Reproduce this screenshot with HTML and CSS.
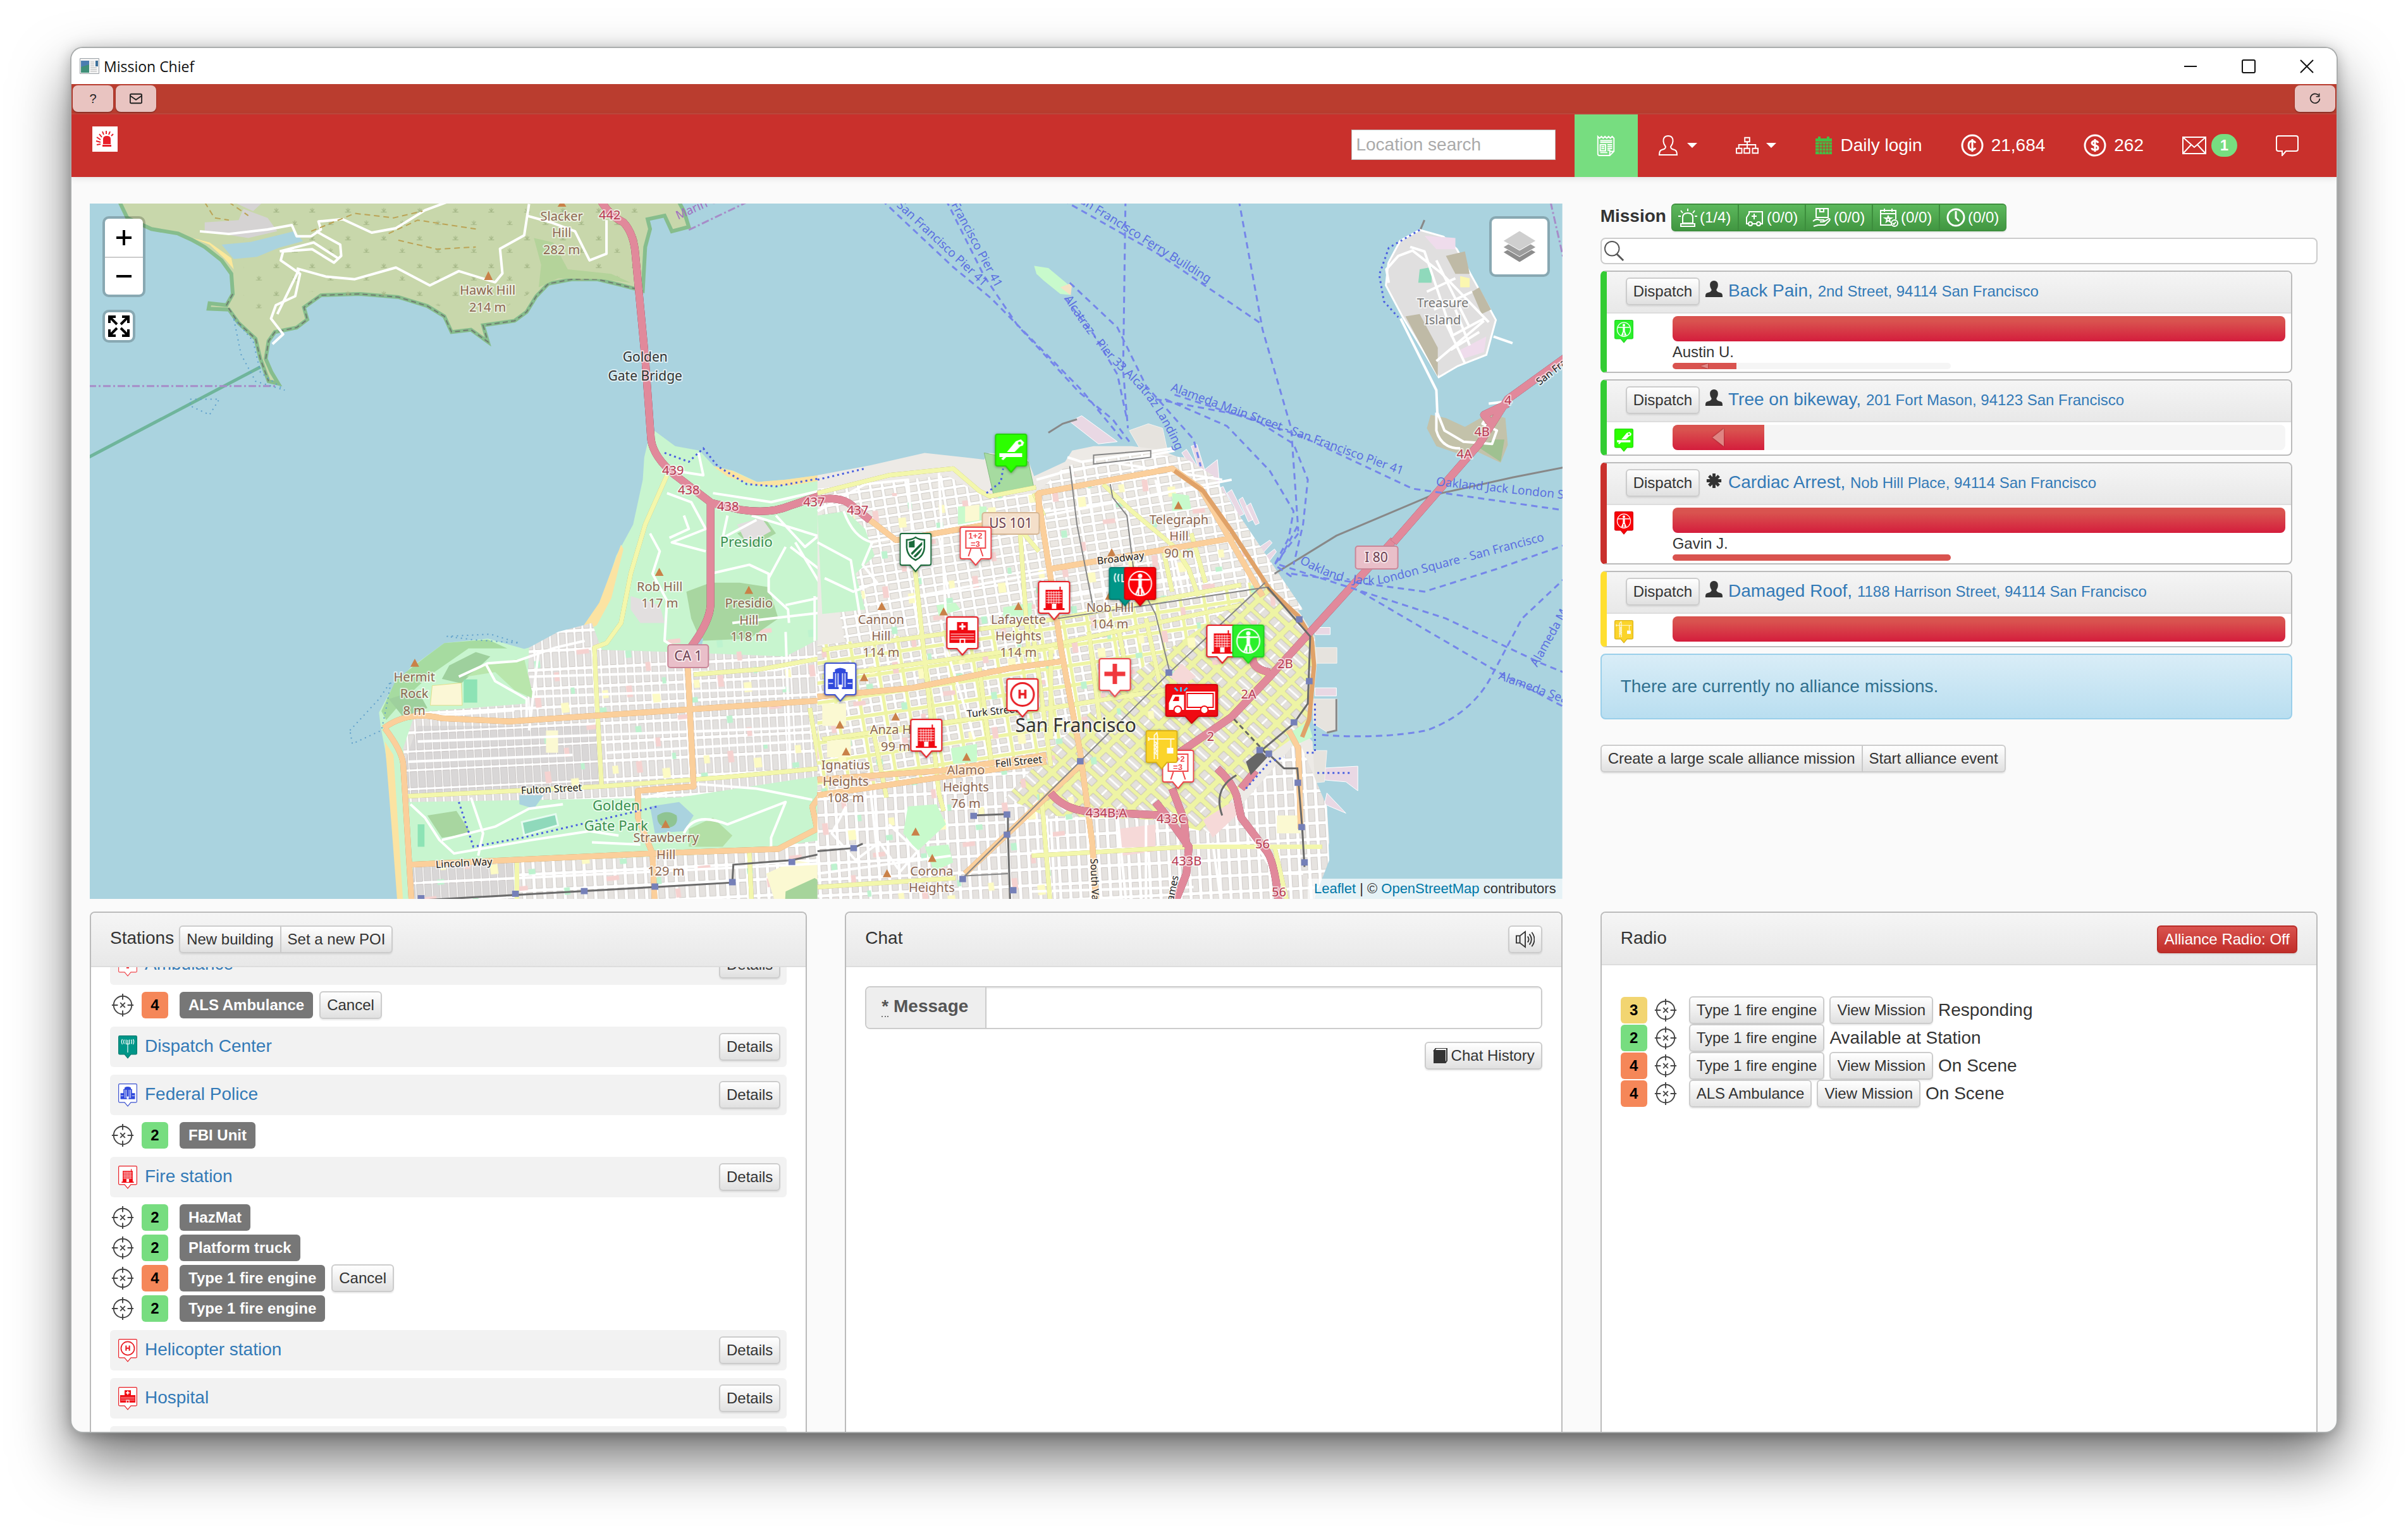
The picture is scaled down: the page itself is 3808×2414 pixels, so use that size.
FILE: index.html
```html
<!DOCTYPE html>
<html lang="en">
<head>
<meta charset="utf-8">
<meta name="viewport" content="width=device-width, initial-scale=1">
<title>Mission Chief</title>
<link rel="stylesheet" href="styles.css">
</head>
<body>
<svg class="defs" aria-hidden="true">
  <defs>
    <path id="pin" d="M4 1h43a3 3 0 0 1 3 3v44a3 3 0 0 1-3 3H34l-8.500 10L17 51H4a3 3 0 0 1-3-3V4a3 3 0 0 1 3-3z"/>
    <g id="man" fill="none" stroke="#fff" stroke-width="2">
      <ellipse cx="25.500" cy="26" rx="18" ry="19"/>
      <circle cx="25.500" cy="14" r="2.500" fill="#fff"/>
      <path d="M9 20l16 0 16 0M25.500 18v16M24 18v13l-5 12M27 18v13l5 12M23 32v12M28 32v12" stroke-width="2.500"/>
    </g>
    <symbol id="i-fire" viewBox="0 0 51 63"><use href="#pin" fill="#fff" stroke="#e81c23" stroke-width="2"/><path fill="#f00a12" d="M12 14h22v-5h2v5h3v29h3v3H9v-3h3z"/><path stroke="#fff" stroke-width="1" d="M13 18h25M13 22h25M13 26h25M13 30h25M13 34h25M17 16v20M21 16v20M25 16v20M29 16v20M33 16v20"/><path fill="#fff" d="M22 36h7v8h-7z"/></symbol>
    <symbol id="i-hospital" viewBox="0 0 51 63"><use href="#pin" fill="#fff" stroke="#e81c23" stroke-width="2"/><path fill="#f00a12" d="M17 9h17v13h12v20H5V22h12z"/><path fill="none" stroke="#fff" stroke-width="3" d="M25.500 11v10M20.500 16h10"/><path stroke="#fff" d="M7 28h37M7 32h37M7 36h37" /><path fill="#fff" d="M21 35h9v8h-9z"/><path fill="#f00a12" d="M23 37h5v5h-5z"/></symbol>
    <symbol id="i-heli" viewBox="0 0 51 63"><use href="#pin" fill="#fff" stroke="#e81c23" stroke-width="2"/><ellipse cx="25.500" cy="25.500" rx="18" ry="18" fill="none" stroke="#e81c23" stroke-width="3"/><path fill="none" stroke="#e81c23" stroke-width="3.500" d="M21 18v14M30 18v14M21 25h9"/></symbol>
    <symbol id="i-med" viewBox="0 0 51 63"><use href="#pin" fill="#fff" stroke="#f0474c" stroke-width="2"/><path stroke="#f0383d" stroke-width="7" d="M25.500 9v32M9 25h33"/></symbol>
    <symbol id="i-fed" viewBox="0 0 51 63"><use href="#pin" fill="#fff" stroke="#3a50d0" stroke-width="2"/><path fill="#2f49dc" d="M17 11q8-5 17 0v4h3v11h8v16H6V26h8V15h3z"/><path stroke="#fff" stroke-width="1.500" d="M18 17v22M22 17v22M29 17v22M33 17v22M7 33h7M37 33h7"/><path fill="#fff" d="M23 35h5v7h-5z"/></symbol>
    <symbol id="i-shield" viewBox="0 0 51 63"><use href="#pin" fill="#fff" stroke="#1c6b3c" stroke-width="2"/><path fill="#fff" stroke="#1c6b3c" stroke-width="2.500" d="M25.500 7q6 4 14 4v12q-1 14-14 20-13-6-14-20V11q8 0 14-4z"/><path fill="#1c6b3c" d="M24 11v12H15V14q5 0 9-3zM18 32l18-18v5L20 35zM22 37l14-14q-1 8-11 16z"/></symbol>
    <symbol id="i-school" viewBox="0 0 51 63"><use href="#pin" fill="#fff" stroke="#f0474c" stroke-width="2"/><path fill="none" stroke="#f0474c" stroke-width="2" d="M10 7h31v27H10zM18 35l-4 12M33 35l4 12"/><text x="25" y="19" class="pin-digits" text-anchor="middle">1+2</text><text x="25" y="32" class="pin-digits" text-anchor="middle">=3</text></symbol>
    <symbol id="i-dispatch" viewBox="0 0 51 63"><use href="#pin" fill="#009688" stroke="#067c70" stroke-width="2"/><path fill="none" stroke="#fff" stroke-width="2" d="M25.500 12v34M21 11v12h9V11M16 11q-3 6 0 12M11 10q-4 7 0 14M35 11q3 6 0 12M40 10q4 7 0 14"/></symbol>
    <symbol id="i-man-red" viewBox="0 0 51 63"><use href="#pin" fill="#fa0008" stroke="#d30008" stroke-width="2"/><use href="#man"/></symbol>
    <symbol id="i-man-green" viewBox="0 0 51 63"><use href="#pin" fill="#2bf02b" stroke="#1fd41f" stroke-width="2"/><use href="#man"/></symbol>
    <symbol id="i-saw" viewBox="0 0 51 63"><use href="#pin" fill="#2cff00" stroke="#22d800" stroke-width="2"/><path fill="#fff" d="M7 31h36v6H7zM13 42l-3-2 6-6h5zM19 29l14-17 8-3 5 5-2 5-4 1-9 9z"/><circle cx="39" cy="15" r="2.500" fill="#2cff00"/></symbol>
    <symbol id="i-crane" viewBox="0 0 51 63"><use href="#pin" fill="#fbd42a" stroke="#d9b21b" stroke-width="2"/><path fill="none" stroke="#fff" stroke-width="2" d="M14 46V8l4-4 1 6M19 46V10M5 14h41M5 11v6M40 14v14M14 18l5 3-5 3 5 3-5 3 5 3-5 3 5 3" opacity=".85"/><path fill="#fff" d="M34 28h10v9H34z"/></symbol>
    <symbol id="i-truck" viewBox="0 0 84 63"><path fill="#f00a12" stroke="#d30008" stroke-width="2" d="M4 1h76a3 3 0 0 1 3 3v44a3 3 0 0 1-3 3H53L42 62 32 51H4a3 3 0 0 1-3-3V4a3 3 0 0 1 3-3z"/><path fill="#fff" d="M33 12h46v29H33zM6 41V30l6-13h18v24z"/><path fill="#f00a12" d="M12 27l4-7h6v7z"/><path stroke="#f00a12" stroke-width="2" fill="none" d="M35 15h41v22H35z"/><g fill="#fff" stroke="#f00a12" stroke-width="2"><circle cx="20" cy="41" r="6"/><circle cx="62" cy="41" r="6"/></g><path stroke="#4cb7e8" stroke-width="3" d="M25 12V5M20 11l-5-5M30 11l5-5"/></symbol>
    <symbol id="i-target" viewBox="0 0 38 42"><g fill="none" stroke="#444" stroke-width="2"><circle cx="19" cy="21" r="15"/><path d="M19 2v10M19 30v10M1 21h10M27 21h10M15 17l8 8M23 17l-8 8"/></g></symbol>
    <symbol id="i-user" viewBox="0 0 30 30"><path d="M15 1c5 0 7 4 6.500 8-.3 4-2 5-2.500 7 0 3 4 4 7 5 3 1 3 4 3 7H1c0-3 0-6 3-7 3-1 7-2 7-5-.5-2-2.200-3-2.500-7C8 5 10 1 15 1z"/></symbol>
    <symbol id="i-star" viewBox="0 0 30 30"><path fill="none" stroke="#333" stroke-width="5" d="M15 3v24M3 15h24M7 7l16 16M23 7L7 23"/></symbol>

    <pattern id="p-rich" width="17" height="42" patternUnits="userSpaceOnUse" patternTransform="rotate(-3)"><path fill="#fff" d="M0 0h17v42H0z"/><path fill="#e3e1df" stroke="#c4bfba" d="M2.500 4.500h12v34h-12z"/></pattern>
    <pattern id="p-sun" width="17" height="42" patternUnits="userSpaceOnUse" patternTransform="rotate(-3)"><path fill="#fff" d="M0 0h17v42H0z"/><path fill="#d9d7d7" stroke="#bdb9b7" d="M1.500 3.500h14v36h-14z"/></pattern>
    <pattern id="p-north" width="25" height="21" patternUnits="userSpaceOnUse" patternTransform="rotate(-9)"><path fill="#fff" d="M0 0h25v21H0z"/><path fill="#ebe8e3" stroke="#c2bdb8" d="M3.500 3.500h18v14h-18z"/></pattern>
    <pattern id="p-down" width="50" height="44" patternUnits="userSpaceOnUse" patternTransform="rotate(-9)"><path fill="#fff" d="M0 0h50v44H0z"/><path fill="#eef4a4" d="M0 0h50v8H0zM0 0h7v44H0z"/><path fill="#e7e4df" stroke="#bfbab4" d="M9.500 10.500h13v11h-13zM29.500 10.500h15v11h-15zM9.500 28.500h13v12h-13zM29.500 28.500h15v12h-15z"/></pattern>
    <pattern id="p-soma" width="44" height="58" patternUnits="userSpaceOnUse" patternTransform="rotate(44)"><path fill="#eef4a4" d="M0 0h44v58H0z"/><path fill="#e4e1dc" stroke="#bab5af" d="M6.500 6.500h31v17h-31zM6.500 32.500h31v20h-31z"/><path fill="#fff" d="M20 7h4v16h-4zM7 41h30v4H7z"/></pattern>
    <pattern id="p-miss" width="21" height="36" patternUnits="userSpaceOnUse" patternTransform="rotate(-3)"><path fill="#fff" d="M0 0h21v36H0z"/><path fill="#e6e3e0" stroke="#c2bdb8" d="M3.500 3.500h13v28h-13z"/></pattern>
    <pattern id="p-speck" width="190" height="170" patternUnits="userSpaceOnUse" patternTransform="rotate(-7)"><path fill="#f6d2d0" d="M20 18h12v26H20zM118 96h26v10h-26zM66 140h10v20H66z"/><path fill="#fdfbc4" d="M72 40h16v22H72zM160 22h12v18h-12z"/><path fill="#bdf3cf" d="M150 60h14v12h-14zM28 110h12v16H28zM96 8h8v14h-8z"/></pattern>
    <pattern id="p-scrub" width="74" height="62" patternUnits="userSpaceOnUse"><path fill="none" stroke="#a3b585" stroke-width="1.500" d="M12 22h12M18 22v-9M18 21l-4-6M18 21l4-6M50 50h12M56 50v-9M56 49l-4-6M56 49l4-6"/></pattern>
  </defs>
</svg>

<div class="window">
  <header class="titlebar">
    <svg class="app-icon" viewBox="0 0 31 25"><path fill="#f4f4f4" stroke="#9aa0a6" d="M.5.5h30v24H.5z"/><path fill="#3f8f78" d="M2 4h13v19H2z"/><path fill="#4a7db0" d="M2 4h13v6L2 14z"/><path fill="#3a6f9a" d="M25 4h4v9h-4z"/><path stroke="#b8b8b8" d="M17 6h6M17 9h6M17 12h6M17 15h10M17 18h10M17 21h10"/></svg>
    <h1>Mission Chief</h1>
    <div class="caption">
      <button type="button" aria-label="Minimize"><svg viewBox="0 0 22 22"><path d="M1 11h20"/></svg></button>
      <button type="button" aria-label="Maximize"><svg viewBox="0 0 22 22"><rect x="1" y="1" width="20" height="20" rx="2"/></svg></button>
      <button type="button" aria-label="Close"><svg viewBox="0 0 22 22"><path d="M1 1l20 20M21 1L1 21"/></svg></button>
    </div>
  </header>

  <div class="toolbar">
    <button type="button" aria-label="Help">?</button>
    <button type="button" aria-label="Mail"><svg viewBox="0 0 22 18"><rect x="1" y="1" width="20" height="16" rx="2"/><path d="M1 4l10 7 10-7"/></svg></button>
    <button type="button" class="push" aria-label="Reload"><svg viewBox="0 0 22 22"><path d="M18 5a9 9 0 1 0 2 6M19 1v6h-6"/></svg></button>
  </div>

  <nav class="navbar">
    <a href="#" class="logo" aria-label="Home"><svg viewBox="0 0 40 40"><path fill="#fff" d="M0 0h40v40H0z"/><path fill="#e8202a" d="M17 28V20q0-5 6-5t6 5v8zM16 29h14v3H16z"/><path stroke="#e8202a" stroke-width="2" d="M13 28l-6 1M13 25l-7-2M13 21l-6-4M15 17l-4-5M18 13l-2-5M22 12V7M26 13l2-5M30 15l3-3"/></svg></a>
    <input type="text" class="location" placeholder="Location search" aria-label="Location search">
    <ul>
      <li class="active"><a href="#" aria-label="News"><svg class="ic" viewBox="0 0 36 36"><path d="M4 3l3 3 3-3 3 3 3-3 3 3 3-3 3 3 3-3 3 3v22l-7 7H7q-3 0-3-3zM31 28h-7v7M8 10h20M8 13h20M8 17h9v10H8zM20 17h8M20 20h8M20 23h8M20 26h5M8 30h12M10 20h5M10 23h5"/></svg></a></li>
      <li><a href="#" aria-label="Profile"><svg class="ic" viewBox="0 0 32 34"><path d="M16 2c6 0 8 4 7.500 9-.3 4-2 6-3.500 8 0 4 3 4 6 5 4 1 4 5 4 8H2c0-3 0-7 4-8 3-1 6-1 6-5-1.500-2-3.200-4-3.500-8C8 6 10 2 16 2z"/></svg><i class="caret"></i></a></li>
      <li><a href="#" aria-label="Alliance"><svg class="ic" viewBox="0 0 38 30"><path d="M15 2h8v7h-8zM1 20h9v8H1zM14 20h9v8h-9zM28 20h9v8h-9zM19 9v11M5 20v-6h28v6"/></svg><i class="caret"></i></a></li>
      <li><a href="#"><svg class="cal" viewBox="0 0 26 28"><path d="M0 3h4V0h4v3h10V0h4v3h4v5H0zM0 9h26v19H0z"/><path stroke="#c9302c" d="M0 13h26M0 18h26M0 23h26M6 10v17M11 10v17M16 10v17M21 10v17"/></svg>Daily login</a></li>
      <li><a href="#"><svg class="ic coin" viewBox="0 0 36 36"><circle cx="18" cy="18" r="16"/><path d="M23 14q-2-3-5-3-6 0-6 7t6 7q3 0 5-3M18 8v20"/></svg>21,684</a></li>
      <li><a href="#"><svg class="ic coin" viewBox="0 0 36 36"><circle cx="18" cy="18" r="16"/><path d="M23 14q-1-3-5-3t-5 3q0 3 5 4t5 4q0 3-5 3t-5-3M18 8v20"/></svg>262</a></li>
      <li><a href="#"><svg class="ic mail" viewBox="0 0 38 30"><path d="M1 2h36v26H1zM1 2l18 16L37 2M1 28l13-14M37 28L24 14"/></svg><span class="count">1</span></a></li>
      <li><a href="#" aria-label="Chat"><svg class="ic" viewBox="0 0 36 34"><path d="M4 2h28q3 0 3 3v18q0 3-3 3H16l-6 7v-7H4q-3 0-3-3V5q0-3 3-3z"/></svg></a></li>
    </ul>
  </nav>

  <main>
    <section class="map" aria-label="Map">
      <svg class="map-art" viewBox="0 0 2328 1100" preserveAspectRatio="xMidYMid slice">
        <path fill="#aad3df" d="M0 0h2328v1100H0z"/>

        <!-- western half: Marin headlands, Presidio, Richmond, Golden Gate Park -->
        <g transform="translate(-2 -2) scale(.7653 .7079)" class="geo">
          <g>
            <path fill="#c8d7ab" stroke="#86bd8c" stroke-width="6" d="M60-10L80 35 130 60 185 70 215 85 240 100 275 130 295 160 298 205 285 230 250 226 248 238 290 240 310 270 345 305 355 350 372 400 392 405 378 380 366 350 372 310 385 290 430 280 452 262 445 235 480 208 560 205 640 212 700 232 735 255 750 290 790 285 825 312 815 275 880 265 905 245 925 210 950 182 1000 172 1050 172 1100 185 1145 198 1150 100 1160 60 1155 38 1190 30 1205 65 1240 55 1230 20 1215-10z"/>
            <path fill="none" stroke="#6f7d70" stroke-width="2" stroke-dasharray="8 5" d="M298 205l-13 25 25 40 35 35 10 45 17 50M366 350l6-40 13-20 45-10 22-18-7-27 35-27 80-3 80 7 60 20 35 23 15 35 40-5 35 27-10-37 65-10 25-20 20-35 25-28 50-10h50l50 13 45 13"/>
            <path fill="url(#p-scrub)" d="M320 10h820v170L950 180 820 260 700 225 460 200 320 250z"/>
            <path fill="#b4d39a" d="M920 80l40 10 30 60 90 10 40 20-60-8-90-2-40 20 5-50z"/>
            <path fill="#fbe89a" d="M215 80l35 10 45 35 5 25-20-25-30-30z"/>
            <path fill="#aad3df" d="M300 127l-25-32 60-6 90-24 18 22-50 15-45 20z"/>
            <path fill="#d5d3d3" d="M240 45l70-5 10-25 50 20 20 30-60 15-90-15zM300 0h60l-20 20z"/>
            <g class="w"><path d="M230 65l60 6 80-10 50-10 10 25h30l20-15-5-18 50-5 60 30 50-10 60-40 50-20 14-20M470 65l50 30 2 25-15 15-45-30-60 5-5 20 40 30-10 50-40 20-10 30 25 35-22 22M430 148l60 18 60 6 85-26 70 40 60-32 75 25 15-20-5-55 50-30 10-70M905 30l50 15 50 20 30 65 35-15 0-75"/><path d="M395 110l70-20 50 35M435 150l-20 45-25 55"/></g>
            <path class="track" d="M460 65l90-40 80 10 60-15M620 70l60-30 120 20M640 85l80 20 80-5M240 0l20 35 30 5M290 0l40 30"/>
          </g>
          <path stroke="#6fb59b" stroke-width="5" fill="none" d="M0 570L355 368"/>
          <path class="border" d="M0 411h390M1240 62l120-62"/>

          <path fill="#c8f5cf" d="M1162 505l50 40 50 10 30 35 40 10 50 25 60-5 150-22V1590H648L630 1350 612 1220 604 1175 600 1140 625 1090 665 1040 735 985 825 975 900 998 960 980 1025 945 1060 890 1090 790 1125 720 1145 620 1148 570z"/>
          <path fill="#fbe3a2" d="M1100 765l-45 130-35 55-60 30 50-10 40-25 30-60 25-110zM612 1205l18 30 20 330h-12L625 1380zM1290 590l40 10 50 25 60-5 150-22v10l-140 25-70 0-60-20z"/>
          <path fill="url(#p-rich)" d="M675 1140l230-20 5-125 60-35 70-20 20 60 150 5 230 10 140-80v335l-360 60-560 10-10-120z"/>
          <path fill="url(#p-sun)" d="M680 1170l370 0 5 130-395 30-5-85zM670 1480l210-10v110l-210 0z"/>
          <path fill="url(#p-miss)" d="M880 1475l440-20 260-40v160H880z"/>
          <path fill="url(#p-speck)" d="M910 1010l670-80v330l-650 50zM690 1480l880-50v160H690z"/>
          <path fill="#a6dba0" d="M735 985l90-8 40 20-80 0-80 60-50 50-40 50-10-20 30-70 60-50z"/>
          <path fill="#9ed09d" d="M745 1035l55-30 30 10-60 60-40-10zM620 1110l60-20 20 40-50 20z"/>
          <path fill="#b9e6ac" d="M820 1030l80-10 20 90-40-20-40-40-60 10z"/>
          <path fill="#fbf7d6" stroke="#e2e08c" d="M710 1080l60-6 2 50h-66z"/>
          <path fill="#8de3b5" d="M775 1066h28v52h-28zM680 1390h14v50h-14z"/>
          <path fill="#a8d6a0" d="M1235 870l50-20 60 0 60 10 20 70-60 45-100 5-20-50zM700 1370l60-10 30 50-60 10zM1340 740l60-30 20 30-50 30z"/>
          <path fill="#b3dfa6" d="M1240 1400l50-25 40 40-20 25-70 0z"/>
          <path fill="#aad3df" d="M1160 1350l60-10 30 30-20 35-60 5zM890 1325l50 0-20 30-30-10zM1250 970l20 5-5 25-20-5z"/>
          <path fill="#8fc493" d="M1175 1370q20-15 40 0 5 25-20 28-22-5-20-28z"/>
          <path fill="#e2dfdf" d="M1120 880l60 20 10 40-50 0-20-30zM1340 720l50-15 20 30-50 30z"/>
          <path fill="#8fd9bb" stroke="#e6fbf0" stroke-width="3" d="M895 1385l70-18 5 25-70 22z"/>
          <path fill="#fbf9d2" d="M1400 1500l60-30 50 10-10 90h-80zM945 1180h25v50h-25z"/>
          <path fill="#a6d49b" d="M1440 1540l60-30 60 40 8 30h-130z"/>
          <g class="w">
            <path d="M1160 740l20 40-15 50 30 60-5 90 30 20M1290 650l120 20 160-40M1195 650l50 20 30 60-70 30 70 20M1230 700l10 30-40 20M1210 600l60 10-10-50M1285 830l80-20 40 20 0 40 40 40 2 30M1440 770l-20 40-15 30M1370 700l60 20 90 30 50 60M1320 700l-10 50 70-40M1420 700l60 70 90-80M1450 770l60 50M1460 760l50 90"/>
            <path d="M765 1060l60-30 60-5 80-30 60-15M820 1030l20 40 65 40 0 40M665 1345l30 30 30 50 30 30 160-30 120-20 60 10M730 1425l110-30 70-40 70-10M790 1330l25 80-10 50M1150 1330l110-30 120 10 115 25M1230 1410q20-50 90-20l120-50-30 80 0 30M1040 1430l100 5"/>
            <path d="M660 1250l340-15M680 1205l760-30 100-10M910 1060l510-15 150-40M920 1105l520-20M930 1000l-20 180M1440 960l10 310M680 1150l200-15M1070 1230l470-30M690 1520l870-45"/>
            <path d="M1330 940l240-30M1440 900l130-30M1500 880l0 100M1540 860v100"/>
          </g>
          <g class="y"><path d="M1195 610l-45 110-30 110-20 110-30 45-25 10 5 120 10 190M660 1327l400-22 250-20 200-20M1250 1055l140-12 180-35M1490 1130l30 190 30 120 10 100M1365 1450l5 120M885 1470v110"/></g>
          <g class="o"><path d="M610 1175q50-40 120-22l140 7 360-26 340-25M612 1175q35 50 38 80l18 320M1238 1040l12 265-115 10 0 60 30 80 5 120M665 1480l500-25 260-10 80-45-10-50 20-30"/></g>
          <path class="bluedots" d="M1190 560l50 20 30-30 30 40 60 40 60 5 150-30M765 1340l30 100 100-20 80-20 200-50"/>
          <g class="m"><path d="M1055-10q20 40 50 55 22 25 25 75l7 80 13 150 12 180q5 40 50 80l75 62 60 15q60 10 100-8l60-22 66 0M1285 675l0 225q-2 40-45 100"/></g>
          <path class="rail" d="M680 1560l490-30 160-10 2-40 120-10 130-30"/>
          <path class="stops" d="M680 1548h14v14h-14zM875 1538h14v14h-14zM1017 1532h14v14h-14zM1163 1522h14v14h-14zM1323 1512h14v14h-14zM1446 1467h14v14h-14z"/>
          <path class="bluefleck" d="M210 440l60 0-20 35-40-20zM300 260l40 50 15 70 50 40-60-20-30-60zM540 1180l60-70 25-40-10 60-10 50-60 30zM740 970l90-5 60 20-100-8z"/>
          <path class="peaks" d="M826 154l9 20h-18zM978-5l9 15h-18zM1179 817l9 18h-18zM1364 857l9 18h-18zM674 1020l9 18h-18zM1192 1380l9 18h-18zM1552 1160l9 18h-18zM1562 1220l9 18h-18z"/>
        </g>

        <!-- eastern half: downtown, bay and bridge -->
        <g transform="translate(1158 -2) scale(.7526 .7079)" class="geo">
          <g fill="#e9d8e4" stroke="#fff" stroke-width="1"><path d="M520 490l60 50 40-5-75-58zM755 560l10-8 30 50-10 5zM775 545l12-4 20 70-10 5zM830 575l5 60-20-5-15-30zM832 640l10-5 22 50-8 5zM850 650l10-8 26 55-10 5zM875 665l8-6 22 50-10 5zM890 680l10-8 18 45-8 4zM905 780l35-25 5 6-30 35zM920 800l30-25 4 6-25 35zM1035 950h32v16h-32zM1035 1085h45v18h-45zM1040 1265l85-5 0 55-25-20-55-5zM1060 1320l40 45-45-20z"/></g>
          <path fill="#e6e3de" stroke="#f5f3ef" d="M645 510l40-15 30 10 10 50-50 10zM1035 995h46v35h-46zM1030 1110h52v70l-20 5-30-20zM1005 1225l55 0-5 70-50 5z"/>
          <path fill="#edeae6" d="M-10 610L100 588 215 560 340 575 350 560 430 570 445 612 510 580 525 555 570 545 650 545 710 553 760 575 795 615 835 670 875 735 925 820 965 868 1005 920 1033 968 1040 1020 1030 1130 1008 1180 1030 1205 1035 1300 1060 1350 1065 1430 1050 1500 1020 1590H-10z"/>
          <path fill="url(#p-north)" d="M-10 640l100-10 170-20 90 50 100-10 60-60 140-30 110 10 60 40 50 80 140 220-950 150z"/>
          <path fill="url(#p-miss)" d="M-10 1290l480-60 90 130 140 10 80 0 20 210H-10zM780 1350l90 10 130-160 60 150 5 120-40 110H790z"/>
          <path fill="url(#p-down)" d="M-10 990l480-60 410-80 55 0-215 200-180 200-550 70z"/>
          <path fill="url(#p-soma)" d="M935 850l100 120 0 60-10 120-40 50-80 60-60 100-30 50-110-30-240-10-80-40 70-80 175-180z"/>
          <path fill="url(#p-speck)" d="M60 650l300 0 250-60 130 20 130 150 90 130-100 120-330 300 0 300H-10V1000l100-50z"/>
          <path fill="#c8f5cf" d="M-10 700l60-10 40 40 20 60-40 40 20 80-90 10z"/>
          <path fill="#a6dba0" stroke="#86b880" d="M340 560l20 95 85-15-12-60z"/>
          <path fill="#c8facc" d="M285 680h60v50h-60zM180 1350l60-5 20 45-60 60-30-40zM215 1440l50-5 10 40-40 20zM270 1220l55-10v40l-50 5zM735 650l35 5 5 30-40 5zM290 910l-10-15-40 5 5 25zM380 905l60-10 0 30-60 5zM975 1190l45-30 10 35-40 20z"/>
          <path fill="#f6d9d8" d="M730 1060l25-30 30 30-30 20zM620 1400l80-10 0 60-70 10zM800 1380l60-40 20 20-60 60z"/>
          <path fill="#fbf9d2" d="M0 1120h50v50H0zM10 1200h50v40H10zM300 680l30-5v35l-30 5zM955 1370h50v40h-50z"/>
          <g class="w">
            <path d="M-10 690l100-60 90-10 10 130 10 200M245 605l15 330M45 690q20 60 60 70l-20 50 30 40-50 20-60-30M-10 760l70 40 20 130M515 570l30 10 190-30M600 580l240 40M450 620l50-15 240-50M470 700l390-80M520 880l360-60M100 760l380-75M100 900l400-80M560 640l40 300M700 620l60 260M250 960l70 240"/>
            <path d="M-10 1330l80-20M50 1350l-30 60 50 60 50-40 40 60M140 1390l60 60-40 50M100 1300l20 200M-10 1500l280-40M480 1380l10 200M620 1370l20 210M680 1380v200M820 1430l20 150M890 1400l60 100 60 0M440 1450l350-10M440 1540l340-10"/>
          </g>
          <g class="y"><path d="M-10 650l150-40 135-15 55 50 22 12 97-20M465 700l-20-50M590 630l60 60 90 80 30 50 20 60M195 820l50 500 10 40M715 770l20 100M775 740l30 110M455 780l-40-50 20 300M0 1060l480-70 400-90M0 1000l500-70 380-75M0 1200l480-70 240-40M480 1000l0 200M440 940l40 320M560 960l25 220M620 940l30 170M680 930l30 150M-10 1530l290-20M460 1320l20 260M440 1460l330-20 280 0M950 1440l30 140M105 1170l30 160M330 1040l25 210"/></g>
          <g class="o"><path d="M100 710l55 45 300-55 0-50 280-55 60 45 130 240M452 650l25 170 25 180 40 230 25 200 10 160M475 820l390-70M-10 1105l200-20 210-45 110-15M300 1500l250-250M-10 1290l260-20 220-35M-10 1325l480-75M980 1180l20 40 5 180"/></g>
          <path fill="none" stroke="#e0a268" stroke-width="7" d="M740 600l60 45 60 90 80 130 60 60 28 50 5 60-10 120-15 40"/>
          <g class="m"><path d="M-10 665q50-10 75 15l35 30M1200 755L940 1060l-80 90-110 80M940 1050q-50-10-30-50M480 1320q30 40 90 42l150 8M700 1340l30 40 40 60-5 60-30 80M735 1310l25 70 5 60M830 1265q30 30 40 60l10 50 50 70q20 20 30 130M880 1310l30-40"/></g>
          <path fill="none" stroke="#888" stroke-width="3" d="M1570 590l-120 25-170 40-200 90-130 85M475 515l30-20 30-10M1255 65l10-25M1080 1110v70l-20 5"/>
          <g class="thinrail"><path d="M520 590l15 130 35 190M605 630l5 30 30 40 15 130 45 90 30 130M295 1510L730 1050 930 850M495 930l440-70M300 1505l90-5M570 565l120-10 0 15-120 15z"/></g>
          <path class="rail" d="M-10 1450l75-7 20-10M315 1370l75-3 0 45 5 160M935 860l90 110-5 150-30 45-90 80M940 1235l30 30 28 0 10 130 5 90M840 1370q-20-60 30-90"/>
          <path fill="none" stroke="#666" stroke-width="3" stroke-dasharray="8 5" d="M865 1155l75 85"/>
          <path fill="#666" d="M890 1250l30-25 15 15-35 40z"/>
          <path class="stops" d="M59 1436h14v14H59zM311 1364h14v14h-14zM381 1361h14v14h-14zM381 1406h14v14h-14zM394 1530h14v14h-14zM288 1505h14v14h-14zM535 1242h14v14h-14zM721 1044h14v14h-14zM995 925h14v14h-14zM1016 1063h14v14h-14zM984 1155h14v14h-14zM912 1217h14v14h-14zM931 1225h14v14h-14zM992 1290h14v14h-14zM1000 1389h14v14h-14zM1006 1468h14v14h-14z"/>
          <!-- islands -->
          <path fill="#e0dfdf" stroke="#fff" stroke-width="3" d="M1255 62l50 15 28 28 82 158-20 78-60 25-40 25-36-65-40-70-35-70 5-50 25-50z"/>
          <path fill="#bfbaa6" d="M1225 255l30-5 38 75v65zM1310 120l40-10 10 50-30 0zM1380 190l25 50-20 10-20-50z"/>
          <path fill="#efdcec" d="M1265 75l65 5 0 25-40 0zM1340 330l55-30-5 35-45 15z"/>
          <path fill="#8fd9bb" d="M1255 150l25-5 0 35-28 0z"/><path fill="#fbf7b0" d="M1340 165l20 5 0 20-20 0z"/>
          <path fill="#c3c2aa" d="M1278 475l-8 30 20 40 55 20 30-8 50 25 15-40-5-60-35-10-50 30-40-20z"/>
          <path fill="#9fc191" d="M1375 545l50 35 8-50-20 0z"/>
          <g class="w"><path d="M1215 260l75 160 2 50 15 40 40 25 60 5 10-30-30-15 20-35M1235 100l30 10 60 190M1190 180l-5-30 25-30 30-12 60 50 100 110M1320 300l70-40M1320 330l60-40M1310 270l40 90M1330 240l30 80M1290 355l100-90M1410 300l40 15M1290 130l70 150M1270 200l60-30M1285 240l80-40M1290 470v40q10 40 50 40M1400 450l40-5"/></g>
          <g class="m"><path d="M1570 340l-130 100-60 100-180 220M1440 450l-50 25 15 20"/></g>
          <path fill="#c8facc" d="M445 142l30 5 45 40 0 20-20-2-35-30-15-15z"/><path fill="#f3e3c4" d="M500 190l25-10-3 28z"/>
          <path class="bluedots" d="M1255 62l-65 40-20 60 10 60 30 35M-10 620l100-25M345 650l30-25 5-30M890 1310l50-60 30-10M1035 1120v110h-20M1040 1275h70"/>
          <path class="ferry" d="M125-5l150 150 80 70 130 140 60 65 85 110M260-5l80 170 70 110 130 150 70 60 35 50M637-5l-5 380 10 130M505-5l200 120 215 155M875-5l50 290 60 220 15 230M520 180l100 100 60 130 100 120 15 60M510 215l60 80 50 90 20 100M700 440l200 40 90 60 30 80-10 100-20 90M720 440l130 60 90 100 50 90-10 60-30 60M740 430l260 90 240 120 330 50M985 830l280 40 150-50 160-60M960 810l350 120 200 100 70 30M1130 870l290 180 160 90M1050 1190q120 10 220-10 100-40 140-130l60-120 90-90M1000 740l-50 70 40 30M960 800l40-80"/>
          <path class="border" d="M1530 0l30 140"/>
          <path class="peaks" d="M748 668l9 18h-18zM608 773l9 18h-18zM603 870l9 18h-18zM125 893l9 18h-18zM255 905l9 18h-18zM412 893l9 18h-18zM154 1140l9 18h-18zM88 1052l9 18H79zM37 1158l9 18H28zM50 1218l9 18H41zM303 1230l9 18h-18zM196 1397l9 18h-18zM231 1456l9 18h-18zM136 1490l9 18h-18z"/>
        </g>

        <g class="water">
          <path id="alc" fill="none" d="M1540 150Q1590 230 1640 275T1725 410"/><path id="oak" fill="none" d="M1912 568Q1985 612 2050 600L2350 520"/>
          <text><textPath href="#alc">Alcatraz - Pier 33 Alcatraz Landing</textPath></text>
          <text><textPath href="#oak">Oakland - Jack London Square - San Francisco</textPath></text>
          <text transform="translate(1412 132) rotate(43)" text-anchor="end">San Francisco Pier 41</text>
          <text transform="translate(1432 134) rotate(62)" text-anchor="end">San Francisco Pier 41</text>
          <text transform="translate(1768 126) rotate(32)" text-anchor="end">San Francisco Ferry Building</text>
          <text transform="translate(1708 296) rotate(20)">Alameda Main Street - San Francisco Pier 41</text>
          <text transform="translate(2128 446) rotate(6)">Oakland Jack London Square</text>
          <text transform="translate(2288 734) rotate(-61)">Alameda Main Street</text>
          <text transform="translate(2226 752) rotate(20)">Alameda Seaplane</text>
          <text transform="translate(930 26) rotate(-24)" class="marin">Marin County</text>
        </g>
        <g class="shield"><rect x="914" y="698" width="64" height="36" rx="4"/><rect x="2001" y="542" width="67" height="36" rx="4"/><rect class="us" x="1411" y="489" width="90" height="34" rx="4"/></g>
        <g class="hill" text-anchor="middle">
          <text x="746" y="27">Slacker</text><text x="746" y="53">Hill</text><text x="746" y="80">282 m</text>
          <text x="629" y="144">Hawk Hill</text><text x="629" y="171">214 m</text>
          <text x="901" y="613">Rob Hill</text><text x="901" y="639">117 m</text>
          <text x="1042" y="639">Presidio</text><text x="1042" y="666">Hill</text><text x="1042" y="692">118 m</text>
          <text x="513" y="756">Hermit</text><text x="513" y="782">Rock</text><text x="513" y="809">8 m</text>
          <text x="911" y="1010">Strawberry</text><text x="911" y="1037">Hill</text><text x="911" y="1063">129 m</text>
          <text x="1722" y="507">Telegraph</text><text x="1722" y="533">Hill</text><text x="1722" y="560">90 m</text>
          <text x="1613" y="646">Nob Hill</text><text x="1613" y="672">104 m</text>
          <text x="1251" y="665">Cannon</text><text x="1251" y="691">Hill</text><text x="1251" y="717">114 m</text>
          <text x="1468" y="665">Lafayette</text><text x="1468" y="691">Heights</text><text x="1468" y="717">114 m</text>
          <text x="1274" y="839">Anza Hill</text><text x="1274" y="866">99 m</text>
          <text x="1195" y="895">Ignatius</text><text x="1195" y="921">Heights</text><text x="1195" y="947">108 m</text>
          <text x="1385" y="903">Alamo</text><text x="1385" y="930">Heights</text><text x="1385" y="956">76 m</text>
          <text x="1331" y="1063">Corona</text><text x="1331" y="1089">Heights</text>
        </g>
        <g class="isle" text-anchor="middle"><text x="2139" y="164">Treasure</text><text x="2139" y="191">Island</text></g>
        <g class="park" text-anchor="middle"><text x="1038" y="543">Presidio</text><text x="832" y="960">Golden</text><text x="832" y="992">Gate Park</text></g>
        <g class="place" text-anchor="middle"><text x="878" y="250">Golden</text><text x="878" y="280">Gate Bridge</text></g>
        <g class="exit" text-anchor="middle"><text x="822" y="25">442</text><text x="922" y="429">439</text><text x="947" y="460">438</text><text x="1009" y="486">438</text><text x="1145" y="479">437</text><text x="1214" y="492">437</text><text x="2242" y="318">4</text><text x="2201" y="368">4B</text><text x="2173" y="403">4A</text><text x="1890" y="735">2B</text><text x="1832" y="783">2A</text><text x="1772" y="850">2</text><text x="1607" y="971">434B;A</text><text x="1710" y="980">433C</text><text x="1734" y="1047">433B</text><text x="1854" y="1020">56</text><text x="1880" y="1096">56</text></g>
        <g class="ref" text-anchor="middle"><text x="946" y="723">CA 1</text><text x="2034" y="567">I 80</text><text x="1456" y="513">US 101</text></g>
        <g class="street"><text transform="translate(682 934) rotate(-3)">Fulton Street</text><text transform="translate(547 1051) rotate(-3)">Lincoln Way</text><text transform="translate(1593 571) rotate(-7)">Broadway</text><text transform="translate(1387 813) rotate(-6)">Turk Street</text><text transform="translate(1432 892) rotate(-6)">Fell Street</text><text transform="translate(1582 1036) rotate(88)">South Van Ness</text><text transform="translate(1712 1108) rotate(-78)">James</text><text transform="translate(2292 288) rotate(-38)">San Francisco</text></g>
        <text class="city" x="1463" y="836">San Francisco</text>

        <g class="markers">
          <use href="#i-shield" x="1280" y="521" width="51" height="63"/>
          <use href="#i-school" x="1375" y="511" width="51" height="63"/>
          <use href="#i-saw" x="1431" y="364" width="51" height="63"/>
          <use href="#i-dispatch" x="1611" y="575" width="51" height="63"/>
          <use href="#i-man-red" x="1635" y="575" width="51" height="63"/>
          <use href="#i-fire" x="1499" y="597" width="51" height="63"/>
          <use href="#i-hospital" x="1354" y="653" width="51" height="63"/>
          <use href="#i-fire" x="1765" y="666" width="51" height="63"/>
          <use href="#i-man-green" x="1806" y="666" width="51" height="63"/>
          <use href="#i-med" x="1595" y="719" width="51" height="63"/>
          <use href="#i-fed" x="1161" y="726" width="51" height="63"/>
          <use href="#i-heli" x="1449" y="751" width="51" height="63"/>
          <use href="#i-truck" x="1700" y="760" width="84" height="63"/>
          <use href="#i-fire" x="1297" y="815" width="51" height="63"/>
          <use href="#i-school" x="1695" y="864" width="51" height="63"/>
          <use href="#i-crane" x="1669" y="833" width="51" height="63"/>
        </g>
      </svg>
      <div class="map-left">
        <div class="control"><button type="button" aria-label="Zoom in"><svg viewBox="0 0 24 24"><path d="M12 0v24M0 12h24"/></svg></button><button type="button" aria-label="Zoom out"><svg viewBox="0 0 24 24"><path d="M0 12h24"/></svg></button></div>
        <div class="control full"><button type="button" aria-label="Full screen"><svg viewBox="0 0 34 34"><path d="M14 14L4 4M20 14L30 4M14 20L4 30M20 20l10 10"/><path d="M2 12V2h10M22 2h10v10M2 22v10h10M22 32h10V22"/></svg></button></div>
      </div>
      <div class="control layers"><button type="button" aria-label="Layers"><svg viewBox="0 0 52 52"><g stroke="#fff" stroke-width="1"><path fill="#8c8c8c" d="M26 20l26 15-26 16L0 35z"/><path fill="#9d9d9d" d="M26 11l26 16-26 15L0 27z"/><path fill="#cfcfcf" d="M26 1l26 16-26 15L0 17z"/></g></svg></button></div>
      <div class="attribution"><a href="#">Leaflet</a> | © <a href="#">OpenStreetMap</a> contributors</div>
    </section>

    <section class="missions">
      <div class="mission-head">
        <h2>Mission</h2>
        <div class="group">
          <button type="button" class="btn success"><svg viewBox="0 0 30 30"><path d="M7 24V15q0-7 8-7t8 7v9zM4 25h22v4H4zM15 1v4M4 4l3 4M26 4l-3 4M0 13h4M26 13h4"/></svg>(1/4)</button>
          <button type="button" class="btn success"><svg viewBox="0 0 30 30"><path d="M5 25H2V15l4-6V6h21v19h-3M11 25h7M14 9v9M10 13h8"/><circle cx="8" cy="25" r="3"/><circle cx="21" cy="25" r="3"/></svg>(0/0)</button>
          <button type="button" class="btn success"><svg viewBox="0 0 30 30"><path d="M6 1h19v14H6zM12 1v5h6V1M1 21q6-5 10-2h7q2 2-2 3h-4M18 22l8-5q3 0 1 3l-7 7H9l-7 2"/></svg>(0/0)</button>
          <button type="button" class="btn success"><svg viewBox="0 0 30 30"><path d="M19 27H2V4h24v14M2 9h24M8 1v5M20 1v5M14 12l1 4h4l-3 2 1 4-3-2-3 2 1-4-3-2h4zM21 24l2 2 3-4"/><circle cx="24" cy="24" r="5"/></svg>(0/0)</button>
          <button type="button" class="btn success"><svg viewBox="0 0 30 30" class="bold"><circle cx="15" cy="15" r="13"/><path d="M15 5v11l5 5"/></svg>(0/0)</button>
        </div>
      </div>
      <label class="mission-search"><svg viewBox="0 0 34 34"><circle cx="13" cy="13" r="12"/><path d="M21 22l11 11" stroke-width="3"/></svg><input type="search" aria-label="Search missions"></label>

      <article class="card green">
        <header><button type="button" class="btn">Dispatch</button><svg class="kind"><use href="#i-user"/></svg><a href="#">Back Pain, <small>2nd Street, 94114 San Francisco</small></a></header>
        <div class="body"><svg class="mpin"><use href="#i-man-green"/></svg><div class="bars"><div class="bar"><div class="fill" style="width:100%"></div></div><p>Austin U.</p><div class="bar thin"><div class="fill" style="width:23%"><i></i></div></div></div></div>
      </article>
      <article class="card green">
        <header><button type="button" class="btn">Dispatch</button><svg class="kind"><use href="#i-user"/></svg><a href="#">Tree on bikeway, <small>201 Fort Mason, 94123 San Francisco</small></a></header>
        <div class="body"><svg class="mpin"><use href="#i-saw"/></svg><div class="bars"><div class="bar"><div class="fill" style="width:15%"><i></i></div></div></div></div>
      </article>
      <article class="card red">
        <header><button type="button" class="btn">Dispatch</button><svg class="kind"><use href="#i-star"/></svg><a href="#">Cardiac Arrest, <small>Nob Hill Place, 94114 San Francisco</small></a></header>
        <div class="body"><svg class="mpin"><use href="#i-man-red"/></svg><div class="bars"><div class="bar"><div class="fill" style="width:100%"></div></div><p>Gavin J.</p><div class="bar thin"><div class="fill" style="width:100%"></div></div></div></div>
      </article>
      <article class="card yellow">
        <header><button type="button" class="btn">Dispatch</button><svg class="kind"><use href="#i-user"/></svg><a href="#">Damaged Roof, <small>1188 Harrison Street, 94114 San Francisco</small></a></header>
        <div class="body"><svg class="mpin"><use href="#i-crane"/></svg><div class="bars"><div class="bar"><div class="fill" style="width:100%"></div></div></div></div>
      </article>

      <p class="alert">There are currently no alliance missions.</p>
      <div class="group"><button type="button" class="btn">Create a large scale alliance mission</button><button type="button" class="btn">Start alliance event</button></div>
    </section>

    <section class="panel">
      <header><h2>Stations</h2><div class="group"><button type="button" class="btn">New building</button><button type="button" class="btn">Set a new POI</button></div></header>
      <div class="scroll">
        <ul class="stations">
          <li><div class="station"><svg><use href="#i-med"/></svg><a href="#">Ambulance</a><button type="button" class="btn">Details</button></div>
            <ul class="vehicles"><li><svg><use href="#i-target"/></svg><span class="fms s4">4</span><a href="#" class="tag">ALS Ambulance</a><button type="button" class="btn">Cancel</button></li></ul></li>
          <li><div class="station"><svg><use href="#i-dispatch"/></svg><a href="#">Dispatch Center</a><button type="button" class="btn">Details</button></div></li>
          <li><div class="station"><svg><use href="#i-fed"/></svg><a href="#">Federal Police</a><button type="button" class="btn">Details</button></div>
            <ul class="vehicles"><li><svg><use href="#i-target"/></svg><span class="fms s2">2</span><a href="#" class="tag">FBI Unit</a></li></ul></li>
          <li><div class="station"><svg><use href="#i-fire"/></svg><a href="#">Fire station</a><button type="button" class="btn">Details</button></div>
            <ul class="vehicles">
              <li><svg><use href="#i-target"/></svg><span class="fms s2">2</span><a href="#" class="tag">HazMat</a></li>
              <li><svg><use href="#i-target"/></svg><span class="fms s2">2</span><a href="#" class="tag">Platform truck</a></li>
              <li><svg><use href="#i-target"/></svg><span class="fms s4">4</span><a href="#" class="tag">Type 1 fire engine</a><button type="button" class="btn">Cancel</button></li>
              <li><svg><use href="#i-target"/></svg><span class="fms s2">2</span><a href="#" class="tag">Type 1 fire engine</a></li>
            </ul></li>
          <li><div class="station"><svg><use href="#i-heli"/></svg><a href="#">Helicopter station</a><button type="button" class="btn">Details</button></div></li>
          <li><div class="station"><svg><use href="#i-hospital"/></svg><a href="#">Hospital</a><button type="button" class="btn">Details</button></div></li>
          <li><div class="station"></div></li>
        </ul>
      </div>
    </section>

    <section class="panel">
      <header><h2>Chat</h2><button type="button" class="btn sound" aria-label="Sound"><svg viewBox="0 0 32 30"><path d="M1 9h6L16 2v26L7 21H1zM7 9v12M20 10q4 5 0 10M23 6q7 9 0 18M27 3q9 12 0 24"/></svg></button></header>
      <div class="chat">
        <div class="message"><label for="msg"><abbr title="required">*</abbr> Message</label><input id="msg" type="text"></div>
        <button type="button" class="btn history"><svg viewBox="0 0 24 24"><path d="M3 4l3-4h17v20l-3 4V4z" fill="#fff" stroke="#333" stroke-width="2"/><path fill="#333" d="M2 3h17v21H2z"/></svg>Chat History</button>
      </div>
    </section>

    <section class="panel">
      <header class="short"><h2>Radio</h2><button type="button" class="btn danger">Alliance Radio: Off</button></header>
      <ul class="radio">
        <li><span class="fms s3">3</span><svg><use href="#i-target"/></svg><button type="button" class="btn">Type 1 fire engine</button><button type="button" class="btn">View Mission</button><span>Responding</span></li>
        <li><span class="fms s2">2</span><svg><use href="#i-target"/></svg><button type="button" class="btn">Type 1 fire engine</button><span>Available at Station</span></li>
        <li><span class="fms s4">4</span><svg><use href="#i-target"/></svg><button type="button" class="btn">Type 1 fire engine</button><button type="button" class="btn">View Mission</button><span>On Scene</span></li>
        <li><span class="fms s4">4</span><svg><use href="#i-target"/></svg><button type="button" class="btn">ALS Ambulance</button><button type="button" class="btn">View Mission</button><span>On Scene</span></li>
      </ul>
    </section>
  </main>
</div>
</body>
</html>
```
FILE: styles.css
```css
* { box-sizing: border-box; }
body {
  margin: 0;
  height: 100vh;
  padding: 76px 113px 149px;
  background: #fff;
  color: #333;
  font: 28px/40px "Liberation Sans", Arial, sans-serif;
}
ul { list-style: none; margin: 0; padding: 0; }
h1, h2, p { margin: 0; font-size: 28px; font-weight: 400; }
a { color: #337ab7; text-decoration: none; }
button, input { font: inherit; color: inherit; }
svg { display: block; flex: none; }
.defs { position: absolute; width: 0; height: 0; }

.window {
  height: 100%;
  display: flex;
  flex-direction: column;
  overflow: hidden;
  background: #fafafa;
  border-radius: 18px;
  box-shadow: 0 0 0 2px #aaadad, 0 4px 24px rgba(0, 0, 0, .3), 0 44px 90px rgba(0, 0, 0, .55);
}

/* window chrome */
.titlebar {
  flex: none;
  height: 57px;
  display: flex;
  align-items: center;
  gap: 7px;
  padding: 0 36px 0 13px;
  background: #fff;
}
.titlebar h1 { font: 23px/32px "Open Sans", "Noto Sans", sans-serif; color: #111; }
.app-icon { width: 31px; height: 25px; }
.caption { margin-left: auto; display: flex; gap: 70px; }
.caption button { border: 0; padding: 0; background: none; }
.caption svg { width: 22px; height: 22px; fill: none; stroke: #111; stroke-width: 2; }
.toolbar {
  flex: none;
  height: 48px;
  display: flex;
  gap: 4px;
  padding: 2px 2px 4px;
  background: #ba3d2f;
  border-bottom: 2px solid #c0493d;
}
.toolbar button {
  width: 64px;
  height: 42px;
  display: grid;
  place-items: center;
  padding: 0;
  border: 0;
  border-radius: 8px;
  background: #e9c4c1;
  box-shadow: 0 1px 2px rgba(0, 0, 0, .4);
  color: #222;
  font-size: 20px;
}
.toolbar svg { width: 20px; height: 18px; fill: none; stroke: #222; stroke-width: 2; }
.toolbar .push { margin-left: auto; }

.navbar {
  flex: none;
  height: 99px;
  display: flex;
  align-items: center;
  padding: 0 29px 0 33px;
  background: #c9302c;
  box-shadow: 0 2px 10px rgba(0, 0, 0, .1);
}
.logo { align-self: flex-start; margin: 19px auto 0 0; }
.logo svg { width: 40px; height: 40px; }
.location {
  width: 323px;
  height: 48px;
  margin: 0 30px 4px 0;
  padding: 0 6px;
  border: 1px solid #bbb;
  background: #fff;
}
.location::placeholder { color: #aaa; opacity: 1; }
.navbar ul { display: flex; height: 100%; }
.navbar li a { height: 100%; display: flex; align-items: center; gap: 12px; padding: 0 31px 2px 30px; color: #fff; line-height: 32px; }
.navbar .active { background: #77dd80; }
.navbar .active a { padding: 0 30px 2px; }
.navbar .ic { width: 36px; height: 34px; fill: none; stroke: #fff; stroke-width: 2; }
.navbar .coin { stroke-width: 3; height: 36px; }
.navbar .mail { width: 38px; }
.navbar .cal { width: 28px; height: 28px; fill: #43bf45; }
.navbar .active svg { width: 40px; }
.caret { border: 8px solid transparent; border-top-color: #fff; border-bottom: 0; }
.count {
  width: 41px;
  height: 36px;
  margin-left: -4px;
  border-radius: 18px;
  background: #77dd80;
  text-align: center;
  font-size: 24px;
  font-weight: 700;
  line-height: 36px;
}

/* page */
main {
  flex: 1;
  min-height: 0;
  display: grid;
  grid-template-columns: repeat(3, minmax(0, 1fr));
  grid-template-rows: auto minmax(0, 1fr);
  gap: 20px 60px;
  padding: 42px 30px 0 29px;
}
.btn {
  flex: none;
  height: 44px;
  padding: 0 10px;
  border: 2px solid #ccc;
  border-radius: 6px;
  background: linear-gradient(#fff, #e0e0e0);
  box-shadow: 0 2px 2px rgba(0, 0, 0, .08);
  font-size: 24px;
  line-height: 36px;
  white-space: nowrap;
}
.group { display: flex; }
.group .btn + .btn { border-left-width: 0; border-radius: 0; }
.group .btn:first-child { border-radius: 6px 0 0 6px; }
.group .btn:last-child { border-radius: 0 6px 6px 0; }
.group .success, .group .success + .success {
  display: flex;
  align-items: center;
  gap: 4px;
  width: 106px;
  border: 2px solid #3e8f3e;
  border-left-width: 1px;
  border-right-width: 1px;
  background: linear-gradient(#5cb85c, #419641);
  color: #fff;
}
.success svg { width: 30px; height: 30px; fill: none; stroke: #fff; stroke-width: 2; }
.success svg.bold { stroke-width: 3; }
.danger { border-color: #b92c28; background: linear-gradient(#d9534f, #c12e2a); color: #fff; }

/* map */
.map { grid-column: span 2; position: relative; height: 1100px; overflow: hidden; }
.map-art { width: 100%; height: 100%; font-family: "Noto Sans", sans-serif; }
.geo * { vector-effect: non-scaling-stroke; }
.geo .w { fill: none; stroke: #fff; stroke-width: 4; stroke-linejoin: round; }
.geo .y { fill: none; stroke: #f3f7ac; stroke-width: 7; stroke-linejoin: round; filter: drop-shadow(0 0 1px #a9a462); }
.geo .o { fill: none; stroke: #fbcf9b; stroke-width: 9; stroke-linejoin: round; filter: drop-shadow(0 0 1px #c08a50); }
.geo .m { fill: none; stroke: #e1899b; stroke-width: 12; stroke-linejoin: round; filter: drop-shadow(0 0 1px #6b2035); }
.geo .track { fill: none; stroke: #bba355; stroke-width: 2; stroke-dasharray: 9 6; }
.geo .border { fill: none; stroke: #a78cc8; stroke-width: 3; stroke-dasharray: 12 4 3 4; }
.geo .ferry { fill: none; stroke: #7586ea; stroke-width: 3; stroke-dasharray: 10 7; }
.geo .bluedots { fill: none; stroke: #4a5fe0; stroke-width: 3; stroke-dasharray: 3 5; }
.geo .bluefleck { fill: none; stroke: #5f9fcb; stroke-width: 2; stroke-dasharray: 2 6; }
.geo .rail { fill: none; stroke: #6a6a6a; stroke-width: 3; }
.geo .thinrail { fill: none; stroke: #858585; stroke-width: 2; }
.geo .stops { fill: #7580b8; }
.geo .peaks { fill: #c98148; }
.map-art text { paint-order: stroke; stroke: rgba(255, 255, 255, .6); stroke-width: 4px; stroke-linejoin: round; }
.hill { font-size: 20px; fill: #8d6650; }
.isle { font-size: 20px; fill: #777; }
.park { font-size: 22px; fill: #3b9150; }
.place { font-size: 21px; fill: #333; }
.exit { font-size: 20px; fill: #b83850; }
.ref { font-size: 21px; fill: #6b4050; }
.street { font-size: 16px; fill: #222; }
.water { font-size: 19px; fill: #5b6fe0; }
.map-art .water text { stroke: none; }
.water .marin { fill: #a06fc0; }
.city { font-size: 30px; fill: #333; }
.map-art .city { text-anchor: start; }
.shield rect { fill: #e9bfc9; stroke: #c98698; stroke-width: 2; }
.shield .us { fill: #f4dfca; stroke: #d5b694; }
.markers { filter: drop-shadow(0 1px 2px rgba(0, 0, 0, .4)); }
.pin-digits { font: 700 13px "Liberation Sans", sans-serif; fill: #f0474c; stroke: none; }
.map-left { position: absolute; left: 20px; top: 20px; display: flex; flex-direction: column; align-items: flex-start; gap: 20px; }
.control { border: 4px solid rgba(0, 0, 0, .2); border-radius: 10px; background: #fff; background-clip: padding-box; }
.control button { width: 60px; height: 60px; display: grid; place-items: center; padding: 0; border: 0; background: none; }
.control button + button { border-top: 2px solid #ccc; }
.control svg { width: 24px; height: 24px; fill: none; stroke: #000; stroke-width: 4; }
.control.full button { width: 44px; height: 44px; }
.control.full svg { width: 34px; height: 34px; }
.layers { position: absolute; right: 20px; top: 20px; }
.control.layers button { width: 88px; height: 88px; }
.control.layers svg { width: 52px; height: 52px; }
.attribution { position: absolute; right: 0; bottom: 0; padding: 0 10px; background: rgba(255, 255, 255, .7); font-size: 22px; line-height: 32px; }
.attribution a { color: #0078a8; }

/* missions */
.mission-head { display: flex; gap: 8px; margin-bottom: 10px; }
.mission-head h2 { font-weight: 700; }
.mission-search {
  display: flex;
  align-items: center;
  height: 42px;
  margin-bottom: 10px;
  padding: 0 4px;
  border: 2px solid #ccc;
  border-radius: 8px;
  background: #fff;
}
.mission-search svg { width: 32px; height: 32px; fill: none; stroke: #555; stroke-width: 2; }
.mission-search input { flex: 1; border: 0; background: none; height: 34px; }
.card {
  margin: 0 40px 10px 0;
  padding-bottom: 4px;
  border: 2px solid #bbb;
  border-left: 10px solid;
  border-radius: 8px;
  background: #fff;
  overflow: hidden;
}
.card.green { border-left-color: #33cc33; }
.card.red { border-left-color: #c9302c; }
.card.yellow { border-left-color: #ffdf30; }
.card header {
  height: 66px;
  display: flex;
  align-items: center;
  gap: 8px;
  padding: 0 30px 10px;
  border-bottom: 2px solid #ddd;
  background: linear-gradient(#f5f5f5, #e8e8e8);
}
.card header .btn { margin-top: 8px; }
.card header a, .kind { margin-top: 6px; }
.card small { font-size: 24px; }
.kind { width: 29px; height: 29px; fill: #333; margin-bottom: 6px; }
.body { display: flex; padding: 4px 9px 0 12px; }
.mpin { width: 30px; height: 37px; margin: 6px 62px 0 0; }
.bars { flex: 1; }
.bars p { font-size: 24px; line-height: 34px; }
.bar { height: 40px; border-radius: 8px; background: #f5f5f5; overflow: hidden; }
.fill { height: 100%; display: grid; place-items: center; background: linear-gradient(#d9534f 20%, #d41d3c); }
.fill i { border: 14px solid transparent; border-right: 18px solid #df8583; border-left: 0; filter: drop-shadow(0 0 1px #7a1a20); }
.thin { width: 440px; height: 10px; }
.thin .fill { background: #d9534f; }
.thin i { border-width: 4px; border-right-width: 12px; }
.alert {
  height: 104px;
  margin: 0 40px 40px 0;
  padding: 30px;
  border: 2px solid #9acfea;
  border-radius: 8px;
  background: linear-gradient(#d9edf7, #b9def0);
  color: #31708f;
}

/* panels */
.panel {
  display: flex;
  flex-direction: column;
  min-height: 0;
  overflow: hidden;
  border: 2px solid #bbb;
  border-bottom: 0;
  border-radius: 8px 8px 0 0;
  background: #fff;
}
.panel > header {
  flex: none;
  height: 86px;
  display: flex;
  gap: 8px;
  padding: 20px 30px 0;
  border-bottom: 2px solid #ddd;
  background: linear-gradient(#f5f5f5, #e8e8e8);
}
.panel > .short { height: 83px; }
.panel > header > .btn { margin-left: auto; }
.sound { width: 54px; }
.sound svg { width: 30px; height: 30px; fill: none; stroke: #333; stroke-width: 2; }
.scroll { flex: 1; min-height: 0; overflow: hidden; padding: 0 30px; }
.stations { margin-top: -36px; }
.station {
  height: 64px;
  display: flex;
  align-items: center;
  gap: 12px;
  margin-bottom: 12px;
  padding: 0 10px 0 13px;
  border-radius: 6px;
  background: #f2f2f2;
}
.station svg { width: 30px; height: 37px; }
.station a { flex: 1; padding-bottom: 2px; }
.vehicles { margin-top: -4px; padding-bottom: 10px; }
.vehicles li { height: 48px; display: flex; align-items: center; }
.vehicles svg, .radio svg { width: 38px; height: 40px; }
.vehicles svg { margin: 0 11px 0 1px; }
.fms { width: 42px; height: 42px; border-radius: 6px; text-align: center; font-size: 24px; font-weight: 700; line-height: 42px; color: #000; }
.s2 { background: #77dd80; }
.s3 { background: #f2d571; }
.s4 { background: #f58759; }
.tag { margin: 0 10px 0 18px; padding: 0 14px; border-radius: 6px; background: #777; color: #fff; font-size: 24px; font-weight: 700; line-height: 42px; }
.chat { display: flex; flex-direction: column; align-items: flex-end; gap: 20px; padding: 30px 30px 0; }
.message { align-self: stretch; height: 68px; display: flex; border: 2px solid #ccc; border-radius: 8px; overflow: hidden; }
.message label { width: 190px; padding: 10px 0 0 24px; border-right: 2px solid #ccc; background: #eee; color: #555; font-weight: 700; }
.message input { flex: 1; border: 0; padding: 0 24px; box-shadow: inset 0 2px 2px rgba(0, 0, 0, .08); }
abbr { text-decoration: none; border-bottom: 2px dotted #777; }
.history { display: flex; align-items: center; gap: 6px; }
.history svg { width: 24px; height: 24px; }
.radio { padding: 49px 30px 0; }
.radio li { height: 44px; display: flex; align-items: center; gap: 8px; }
.radio svg { margin: 0 10px 0 2px; }
```
